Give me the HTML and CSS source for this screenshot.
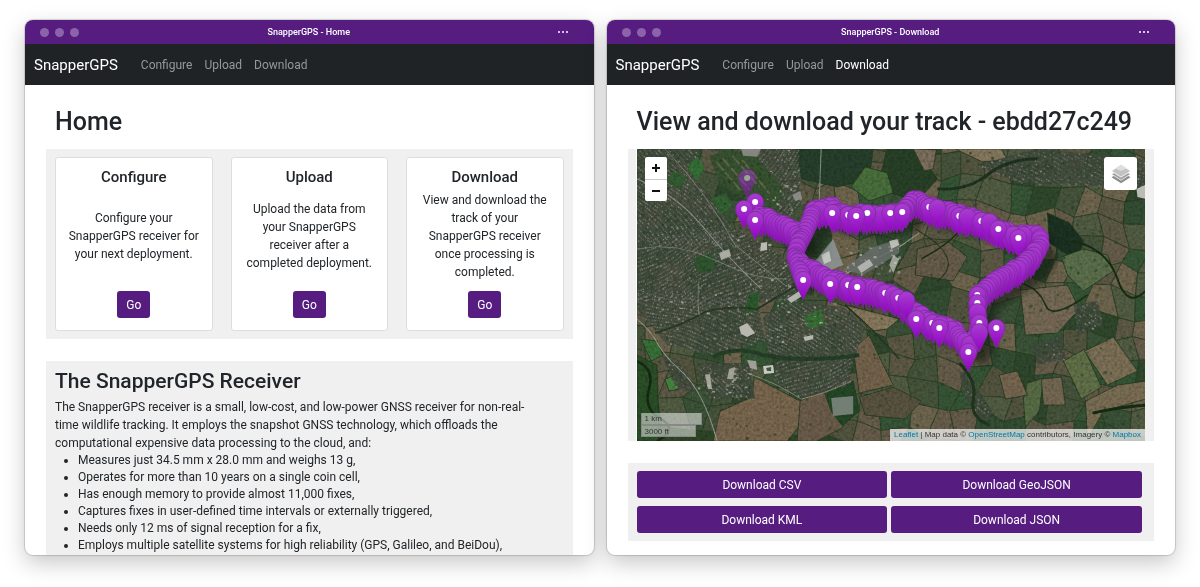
FILE: index.html
```
<!DOCTYPE html>
<html lang="en">
<head>
<meta charset="utf-8">
<meta name="viewport" content="width=device-width, initial-scale=1">
<title>SnapperGPS</title>
<link rel="stylesheet" href="styles.css">
</head>
<body>
<section class="window" aria-label="SnapperGPS - Home">
  <div class="titlebar">
    <div class="lights"><span></span><span></span><span></span></div>
    <div class="title">SnapperGPS - Home</div>
    <button class="more" type="button" aria-label="More"><i></i><i></i><i></i></button>
  </div>
  <nav class="navbar">
    <a class="brand" href="#">SnapperGPS</a>
    <a class="nav-link" href="#">Configure</a>
    <a class="nav-link" href="#">Upload</a>
    <a class="nav-link" href="#">Download</a>
  </nav>
  <main class="content">
    <h1>Home</h1>
    <div class="panel cards">
      <article class="card">
        <h2>Configure</h2>
        <p>Configure your SnapperGPS receiver for your next deployment.</p>
        <button class="btn" type="button">Go</button>
      </article>
      <article class="card">
        <h2>Upload</h2>
        <p>Upload the data from your SnapperGPS receiver after a completed deployment.</p>
        <button class="btn" type="button">Go</button>
      </article>
      <article class="card">
        <h2>Download</h2>
        <p>View and download the track of your SnapperGPS receiver once processing is completed.</p>
        <button class="btn" type="button">Go</button>
      </article>
    </div>
    <div class="panel about">
      <h2>The SnapperGPS Receiver</h2>
      <p>The SnapperGPS receiver is a small, low-cost, and low-power GNSS receiver for non-real-time wildlife tracking. It employs the snapshot GNSS technology, which offloads the computational expensive data processing to the cloud, and:</p>
      <ul>
        <li>Measures just 34.5 mm x 28.0 mm and weighs 13 g,</li>
        <li>Operates for more than 10 years on a single coin cell,</li>
        <li>Has enough memory to provide almost 11,000 fixes,</li>
        <li>Captures fixes in user-defined time intervals or externally triggered,</li>
        <li>Needs only 12 ms of signal reception for a fix,</li>
        <li>Employs multiple satellite systems for high reliability (GPS, Galileo, and BeiDou),</li>
      </ul>
    </div>
  </main>
</section>

<section class="window" aria-label="SnapperGPS - Download">
  <div class="titlebar">
    <div class="lights"><span></span><span></span><span></span></div>
    <div class="title">SnapperGPS - Download</div>
    <button class="more" type="button" aria-label="More"><i></i><i></i><i></i></button>
  </div>
  <nav class="navbar">
    <a class="brand" href="#">SnapperGPS</a>
    <a class="nav-link" href="#">Configure</a>
    <a class="nav-link" href="#">Upload</a>
    <a class="nav-link active" href="#" aria-current="page">Download</a>
  </nav>
  <main class="content">
    <h1>View and download your track - ebdd27c249</h1>
    <div class="panel map-panel">
      <div class="map">
        <svg id="map" class="map-canvas" viewBox="0 0 508 292" preserveAspectRatio="xMidYMid slice" role="img" aria-label="Satellite map with track">
          <defs>
            <linearGradient id="pin" x1="0" y1="0" x2="0" y2="1">
              <stop offset="0" stop-color="#a83fcf"/>
              <stop offset="1" stop-color="#9300c6"/>
            </linearGradient>
            <filter id="grain" x="0" y="0" width="1" height="1">
              <feTurbulence type="fractalNoise" baseFrequency="0.35" numOctaves="3" seed="4"/>
              <feColorMatrix values="0.9 0 0 0 0  0.9 0 0 0 0  0.9 0 0 0 0  0 0 0 0 1"/>
            </filter>
            <filter id="soft"><feGaussianBlur stdDeviation="3"/></filter>
          </defs>
          <rect width="508" height="292" fill="#25381f"/>
          <g id="land"></g>
          <g id="houses"></g>
          <g id="roads" fill="none"></g>
          <rect class="grain" width="508" height="292" filter="url(#grain)"/>
          <g id="buildings"></g>
          <g id="track"></g>
        </svg>
        <div class="zoom">
          <button type="button" aria-label="Zoom in"><svg viewBox="0 0 10 10"><path d="M5 1v8M1 5h8"/></svg></button>
          <button type="button" aria-label="Zoom out"><svg viewBox="0 0 10 10"><path d="M1 5h8"/></svg></button>
        </div>
        <button class="layers" type="button" aria-label="Layers">
          <svg viewBox="0 0 20 20">
            <path d="M0.5 13.3 10 19.3l9.500-6-2.500-1.500L10 16.200 3 11.800z" fill="#8d8d8d"/>
            <path d="M0.500 10.200 10 16.200l9.500-6-2.500-1.500L10 13.100 3 8.700z" fill="#a2a2a2" stroke="#fff" stroke-width=".6"/>
            <path d="M10 .8.500 7 10 13l9.500-6z" fill="#c2c2c2" stroke="#fff" stroke-width=".5"/>
            <path d="M10 .8 4.500 4.400 10 7l5.500-2.600z" fill="#dedede"/>
          </svg>
        </button>
        <div class="scale"><div class="km">1 km</div><div class="ft">3000 ft</div></div>
        <div class="attribution"><a href="#">Leaflet</a> | Map data © <a href="#">OpenStreetMap</a> contributors, Imagery © <a href="#">Mapbox</a></div>
      </div>
    </div>
    <div class="panel downloads">
      <button class="btn" type="button">Download CSV</button>
      <button class="btn" type="button">Download GeoJSON</button>
      <button class="btn" type="button">Download KML</button>
      <button class="btn" type="button">Download JSON</button>
    </div>
  </main>
</section>
<script src="map.js"></script>
</body>
</html>
```

FILE: styles.css
```
* { box-sizing: border-box; }

body {
  margin: 0;
  height: 100vh;
  padding: 20px 25px 32px;
  display: flex;
  gap: 13px;
  background: #fff;
  color: #212529;
  font-family: Roboto, "Liberation Sans", sans-serif;
  font-size: 12px;
  line-height: 18px;
}

h1, h2, p, ul { margin: 0; }
a { text-decoration: none; }
button { font: inherit; border: 0; padding: 0; cursor: pointer; }

.window {
  flex: 1 1 0;
  min-width: 0;
  display: flex;
  flex-direction: column;
  overflow: hidden;
  background: #fff;
  border-radius: 8px;
  box-shadow: 0 0 1px 1px rgba(0, 0, 0, .15), 0 8px 22px rgba(0, 0, 0, .22);
}

.titlebar {
  flex: none;
  height: 24px;
  display: grid;
  grid-template-columns: 1fr auto 1fr;
  align-items: center;
  padding: 0 26px 0 15px;
  background: #561c80;
  color: #fff;
}
.lights { display: flex; gap: 6px; }
.lights span { width: 9px; height: 9px; border-radius: 50%; background: #8c63a8; }
.title { padding-left: 10px; font-size: 9px; font-weight: 500; }
.more { justify-self: end; display: flex; gap: 2px; background: none; }
.more i { width: 2px; height: 2px; border-radius: 50%; background: #fff; }

.navbar {
  flex: none;
  height: 41px;
  display: flex;
  align-items: center;
  gap: 12px;
  padding: 0 9px;
  background: #1f2326;
}
.brand { margin-right: 11px; color: #fff; font-size: 15px; }
.nav-link { color: #96989a; }
.nav-link.active { color: #fff; }

.content { flex: 1; min-height: 0; overflow: hidden; padding: 21px 21px 0; }
h1 { padding: 0 9px; margin-bottom: 11px; font-size: 25px; line-height: 32px; font-weight: 500; white-space: nowrap; }

.panel { background: #f0f0f0; padding: 8px 9px; margin-bottom: 22px; }

.cards { display: grid; grid-template-columns: repeat(3, 1fr); gap: 18px; }
.card {
  min-height: 174px;
  display: flex;
  flex-direction: column;
  align-items: center;
  padding: 10px 10px 12px;
  background: #fff;
  border: 1px solid #dedede;
  border-radius: 3px;
  text-align: center;
}
.card h2 { font-size: 15px; line-height: 18px; font-weight: 500; }
.card p { flex: 1; display: flex; align-items: center; padding-bottom: 6px; }

.btn {
  height: 27px;
  padding: 0 9px;
  border-radius: 3px;
  background: #561c80;
  color: #fff;
}

.about h2 { font-size: 21px; line-height: 24px; font-weight: 500; margin-bottom: 5px; }
.about p { padding-right: 24px; }
.about ul { padding-left: 23px; line-height: 17px; }

.map-panel { padding: 0 9px 0 8px; }
.map { position: relative; border-left: 1px solid #fff; overflow: hidden; }
.map-canvas { display: block; width: 100%; height: 292px; }
.grain { mix-blend-mode: overlay; opacity: .4; }

.zoom {
  position: absolute;
  top: 8px;
  left: 8px;
  display: grid;
  border-radius: 2px;
  overflow: hidden;
}
.zoom button { width: 22px; height: 22px; display: grid; place-items: center; background: #fff; }
.zoom button + button { border-top: 1px solid #ccc; }
.zoom svg { width: 10px; height: 10px; fill: none; stroke: #111; stroke-width: 2; }

.layers {
  position: absolute;
  top: 8px;
  right: 8px;
  width: 33px;
  height: 33px;
  display: grid;
  place-items: center;
  background: #fff;
  border-radius: 3px;
}
.layers svg { width: 20px; height: 20px; }

.scale {
  position: absolute;
  left: 4px;
  bottom: 4px;
  color: #333;
  font: 8px/11px "Liberation Sans", Arial, sans-serif;
}
.scale div {
  height: 12px;
  padding-left: 3px;
  background: rgba(255, 255, 255, .5);
  border: 1px solid #888;
}
.scale .km { width: 61px; border-top: 0; }
.scale .ft { width: 55px; }

.attribution {
  position: absolute;
  right: 0;
  bottom: 0;
  padding: 0 4px;
  background: rgba(255, 255, 255, .7);
  color: #333;
  font: 8px/12px "Liberation Sans", Arial, sans-serif;
  white-space: nowrap;
}
.attribution a { color: #0078a8; }

.downloads { display: grid; grid-template-columns: 1fr 1fr; gap: 8px 4px; padding-right: 12px; }
```

FILE: map.js
```
const NS = 'http://www.w3.org/2000/svg';
const layer = id => document.getElementById(id);

function add(parent, tag, attrs) {
  const el = document.createElementNS(NS, tag);
  for (const k in attrs) el.setAttribute(k, attrs[k]);
  parent.appendChild(el);
  return el;
}

let seed = 7;
function rnd() {
  seed = (seed * 16807) % 2147483647;
  return seed / 2147483647;
}
const pick = list => list[Math.floor(rnd() * list.length)];

function inside(x, y, poly) {
  let hit = false;
  for (let i = 0, j = poly.length - 1; i < poly.length; j = i++) {
    const [xi, yi] = poly[i], [xj, yj] = poly[j];
    if ((yi > y) !== (yj > y) && x < (xj - xi) * (y - yi) / (yj - yi) + xi) hit = !hit;
  }
  return hit;
}

/* Patchwork of fields */
const fieldColours = ['#4b4838', '#434533', '#30432d', '#2a3f29', '#534b3c', '#394430', '#5a523f', '#263a24', '#424b36', '#2c452c'];
const land = layer('land');
const cols = 24, rows = 15, nodes = [];
for (let r = 0; r <= rows; r++) {
  nodes.push([]);
  for (let c = 0; c <= cols; c++) {
    nodes[r].push([
      (c - 1) * 24 + (r - 7) * -3 + (rnd() - .5) * 15,
      (r - 2) * 23 + (c - 12) * 3 + (rnd() - .5) * 14
    ]);
  }
}
for (let r = 0; r < rows; r++) {
  for (let c = 0; c < cols; c++) {
    const q = [nodes[r][c], nodes[r][c + 1], nodes[r + 1][c + 1], nodes[r + 1][c]];
    add(land, 'polygon', { points: q.join(' '), fill: pick(fieldColours), stroke: '#24351f', 'stroke-width': .8 });
  }
}

/* Named pieces of woodland and farmland */
const plots = [
  ['#1f3323', [[156, 0], [236, 0], [232, 30], [200, 38], [165, 30]]],
  ['#20341f', [[250, 0], [280, 0], [300, 30], [280, 52], [240, 40]]],
  ['#3b5a30', [[228, 18], [250, 24], [256, 44], [232, 52], [214, 38]]],
  ['#65594a', [[276, 0], [299, 1], [296, 20], [287, 22]]],
  ['#6c614c', [[318, 0], [364, 0], [370, 11], [345, 13]]],
  ['#16281b', [[410, 64], [432, 74], [446, 92], [440, 112], [412, 94]]],
  ['#4a5a3d', [[424, 108], [446, 100], [470, 106], [476, 122], [446, 142], [430, 126]]],
  ['#5f5544', [[383, 141], [430, 136], [442, 160], [420, 184], [388, 186]]],
  ['#4f5b3a', [[426, 212], [447, 200], [464, 238], [444, 250]]],
  ['#645a45', [[447, 202], [476, 188], [500, 222], [470, 236]]],
  ['#625843', [[448, 252], [480, 236], [508, 232], [508, 250], [466, 262], [450, 290]]],
  ['#475738', [[390, 234], [406, 229], [402, 262], [388, 278], [386, 250]]],
  ['#5e5442', [[404, 230], [424, 228], [428, 256], [406, 256]]],
  ['#605240', [[362, 226], [380, 222], [390, 246], [368, 250]]],
  ['#1d3a1f', [[190, 240], [216, 232], [222, 262], [206, 276], [192, 262]]],
  ['#62533f', [[83, 262], [115, 248], [117, 228], [163, 252], [168, 270], [150, 292], [76, 292]]],
  ['#574b3c', [[163, 252], [186, 240], [194, 262], [206, 278], [180, 292], [160, 292]]],
  ['#5e503d', [[216, 200], [232, 186], [243, 210], [256, 236], [222, 244]]],
  ['#6e624b', [[208, 156], [240, 164], [262, 170], [250, 180], [234, 182]]],
  ['#484334', [[222, 248], [256, 238], [284, 252], [268, 270], [228, 266]]],
  ['#544b3c', [[280, 100], [310, 92], [330, 108], [316, 132], [278, 126]]],
  ['#2d5a2c', [[4, 190], [20, 192], [26, 206], [14, 212]]],
  ['#3a6a34', [[28, 230], [38, 226], [42, 240], [32, 242]]],
  ['#22401f', [[0, 206], [20, 216], [22, 292], [0, 292]]]
];
plots.forEach(([fill, p]) => add(land, 'polygon', { points: p.join(' '), fill, stroke: '#1c2f19', 'stroke-width': .8 }));

/* Built-up areas: rows of small roofs following each district's street angle */
const districts = [
  [.75, .85, [[0, 0], [62, 0], [58, 30], [88, 66], [104, 96], [0, 96]]],
  [-.5, .85, [[0, 90], [100, 80], [150, 110], [160, 150], [60, 160], [0, 150]]],
  [.3, .8, [[0, 140], [120, 150], [128, 190], [80, 206], [30, 196], [0, 160]]],
  [-.9, .85, [[70, 0], [160, 0], [164, 56], [140, 76], [128, 40], [118, 14]]],
  [.6, .85, [[126, 168], [150, 152], [206, 158], [228, 178], [218, 208], [132, 208]]],
  [-.4, .85, [[138, 212], [214, 208], [212, 236], [164, 250], [136, 230]]],
  [.9, .6, [[60, 214], [112, 214], [118, 250], [70, 248]]],
  [.2, .5, [[24, 206], [44, 216], [60, 244], [40, 240]]],
  [.4, .6, [[340, 16], [400, 0], [508, 10], [508, 40], [440, 36], [380, 34]]],
  [.7, .5, [[436, 156], [460, 152], [466, 176], [440, 186]]],
  [.5, .4, [[396, 196], [424, 186], [428, 210], [400, 216]]],
  [.8, .4, [[322, 222], [334, 226], [344, 246], [356, 262], [348, 274], [326, 246]]]
];
const roofs = ['#5f605b', '#6d6a64', '#52544f', '#7d7b75', '#474d44', '#5a5249'];
const roofPaths = roofs.map(() => '');
districts.forEach(([angle, density, poly]) => {
  add(layer('houses'), 'polygon', { points: poly.join(' '), fill: '#343d30', opacity: .85 });
  const ca = Math.cos(angle), sa = Math.sin(angle);
  for (let v = -520; v < 520; v += 3.6) {
    for (let u = -100; u < 620; u += 2.2) {
      const bend = Math.sin(u / 17 + v / 31) * 3;
      const x = u * ca - (v + bend) * sa, y = u * sa + (v + bend) * ca;
      if (rnd() > density || !inside(x, y, poly)) continue;
      const i = Math.floor(rnd() * roofs.length);
      const w = 1 + rnd() * 1.1, h = .9 + rnd() * 1.1;
      roofPaths[i] += `M${x.toFixed(1)} ${y.toFixed(1)}l${(w * ca).toFixed(1)} ${(w * sa).toFixed(1)}l${(-h * sa).toFixed(1)} ${(h * ca).toFixed(1)}l${(-w * ca).toFixed(1)} ${(-w * sa).toFixed(1)}z`;
    }
  }
});
roofPaths.forEach((d, i) => add(layer('houses'), 'path', { d, fill: roofs[i], opacity: .75 }));

/* Golf course and parks between the districts */
[
  ['#2c4227', [[72, 8], [90, 0], [118, 6], [146, 40], [140, 64], [110, 52], [84, 36]]],
  ['#2b5a2c', [[50, 18], [60, 8], [68, 18], [60, 32]]],
  ['#2a4f2a', [[74, 50], [88, 44], [96, 56], [84, 66]]],
  ['#234a25', [[112, 146], [122, 142], [120, 162], [108, 164]]],
  ['#2f5a2c', [[166, 168], [184, 160], [188, 176], [172, 180]]],
  ['#294b28', [[36, 22], [50, 28], [44, 40], [30, 34]]],
  ['#274526', [[56, 110], [74, 104], [80, 120], [62, 124]]]
].forEach(([fill, p]) => add(layer('houses'), 'polygon', { points: p.join(' '), fill }));
['M80 14L104 42', 'M86 10L112 40', 'M96 8L122 38', 'M106 12L132 44'].forEach(d =>
  add(layer('houses'), 'path', { d, fill: 'none', stroke: '#50543a', 'stroke-width': 2, 'stroke-linecap': 'round', 'stroke-dasharray': '9 4' }));

/* Tree clumps */
for (let i = 0; i < 600; i++) {
  add(layer('houses'), 'circle', { cx: (rnd() * 508).toFixed(1), cy: (rnd() * 292).toFixed(1), r: (.5 + rnd() * 1.2).toFixed(1), fill: '#20351d', opacity: .6 });
}

/* Roads, tracks and the river */
[
  ['M0 30Q40 46 66 78T124 140', '#777a74', 1],
  ['M28 0Q70 44 98 96L150 138', '#70746d', .8],
  ['M0 100Q40 92 80 112T150 130', '#70746d', .7],
  ['M0 170Q12 180 18 190Q26 206 42 220Q66 240 80 292', '#7b7f77', 1],
  ['M18 184Q44 176 62 166T120 160L170 130', '#23301f', 2],
  ['M62 132Q60 150 62 166', '#6c7069', .8],
  ['M184 0L182 52', '#737b73', 1],
  ['M206 126L262 98L282 84', '#777c70', 1.2],
  ['M76 208Q100 196 126 206Q168 214 222 206', '#1f3320', 4],
  ['M110 224Q140 234 164 250Q190 244 214 232', '#7d7c6d', .8],
  ['M208 156Q240 184 262 210', '#1b2d19', 1.5],
  ['M0 212Q18 220 12 240T24 270T20 292', '#12220f', 2.5],
  ['M384 134Q402 140 408 156T450 146', '#172914', 1.6],
  ['M436 92Q470 100 480 130T508 142', '#14240f', 2],
  ['M284 110Q310 96 320 84', '#172914', 1.6],
  ['M455 264Q480 258 508 256', '#12240f', 3],
  ['M278 80Q330 110 300 132', '#1a2a17', 1],
  ['M300 40Q330 42 350 26T400 10', '#18291a', 3],
  ['M322 214Q340 232 336 250T352 276', '#1a2b18', 3]
].forEach(([d, stroke, w]) => add(layer('roads'), 'path', { d, stroke, 'stroke-width': w }));

/* Large pale buildings */
[
  ['#8d9493', [[178, 112], [196, 90], [206, 116], [186, 124]]],
  ['#c9cac4', [[184, 106], [192, 102], [194, 112], [187, 115]]],
  ['#666c68', [[206, 120], [236, 98], [262, 90], [262, 104], [226, 126]]],
  ['#b7bab4', [[220, 118], [232, 110], [236, 116], [224, 124]]],
  ['#c5c7bf', [[252, 92], [260, 90], [262, 96], [254, 100]]],
  ['#c8c8c0', [[124, 94], [130, 93], [130, 101], [123, 102]]],
  ['#b5b5ad', [[82, 104], [92, 100], [94, 107], [84, 111]]],
  ['#c4c3bb', [[102, 178], [110, 174], [118, 184], [110, 188], [104, 185]]],
  ['#aaa9a2', [[110, 211], [119, 212], [120, 221], [113, 219]]],
  ['#d6d6d0', [[126, 217], [136, 216], [137, 224], [127, 225]]],
  ['#2f4a33', [[129, 219], [134, 218], [134, 222], [130, 222]]],
  ['#7c857e', [[194, 249], [216, 247], [216, 265], [196, 267]]],
  ['#b0aea2', [[68, 226], [73, 225], [75, 240], [71, 240]]],
  ['#a9a89d', [[92, 220], [98, 218], [96, 230], [90, 230]]],
  ['#bfc1ba', [[150, 150], [162, 142], [165, 147], [154, 154]]],
  ['#c3c3bb', [[166, 188], [176, 186], [176, 190], [168, 192]]],
  ['#8f918b', [[155, 46], [163, 42], [165, 50], [158, 52]]],
  ['#8d8c86', [[104, 0], [124, 0], [120, 8], [106, 7]]],
  ['#c9cac4', [[499, 40], [508, 36], [508, 50], [500, 48]]],
  ['#a9aaa2', [[256, 106], [262, 110], [256, 124], [252, 116]]]
].forEach(([fill, p]) => add(layer('buildings'), 'polygon', { points: p.join(' '), fill, opacity: .9 }));
for (let i = 0; i < 170; i++) {
  const zone = pick([[60, 218, 56, 32], [20, 130, 120, 60], [100, 90, 60, 60], [130, 0, 30, 60], [206, 95, 55, 30], [140, 145, 60, 50]]);
  add(layer('buildings'), 'rect', {
    x: (zone[0] + rnd() * zone[2]).toFixed(1), y: (zone[1] + rnd() * zone[3]).toFixed(1),
    width: (1 + rnd() * 2.2).toFixed(1), height: (1 + rnd() * 1.6).toFixed(1), fill: '#c4c4bb', opacity: (.2 + rnd() * .5).toFixed(2)
  });
}

/* Track: each route lists the centres of the pin heads */
const routes = [
  [[119, 67], [128, 68], [143, 74], [158, 82], [163, 89]],
  [[163, 91], [168, 82], [174, 70], [176, 61], [195, 58], [197, 64], [233, 65], [253, 65], [266, 62], [271, 55], [276, 49], [287, 54], [298, 59], [322, 65], [344, 71], [361, 79], [372, 84], [386, 86], [397, 84], [403, 86]],
  [[403, 88], [403, 95], [396, 106], [383, 117], [366, 127], [350, 137], [342, 144], [341, 155], [340, 165], [342, 176], [338, 187], [331, 200]],
  [[163, 90], [160, 98], [158, 106], [166, 116], [178, 122], [193, 129], [218, 137], [243, 141], [258, 147], [266, 153], [279, 163], [293, 172], [308, 176], [318, 182], [330, 196]],
  [[158, 108], [161, 116], [166, 131]]
];
const track = layer('track');
routes.forEach(r => add(track, 'polyline', {
  points: r.map(([x, y]) => [x + 10, y + 13]).join(' '),
  fill: 'none', stroke: '#0a120a', 'stroke-width': 17, 'stroke-linejoin': 'round', opacity: .5, filter: 'url(#soft)'
}));

function drawPin(x, y, dot, opacity = 1) {
  const g = add(track, 'g', { transform: `translate(${x.toFixed(1)} ${y.toFixed(1)})`, opacity });
  add(g, 'path', { d: 'M0 20C-2 13-8.500 6-8.500 0A8.500 8.500 0 0 1 8.500 0C8.500 6 2 13 0 20Z', fill: 'url(#pin)', stroke: '#7d2a9c', 'stroke-width': .8 });
  if (dot) add(g, 'circle', { r: 3, fill: '#fff' });
}

const pins = [];
routes.forEach(r => {
  for (let i = 1; i < r.length; i++) {
    const [ax, ay] = r[i - 1], [bx, by] = r[i];
    const n = Math.max(1, Math.round(Math.hypot(bx - ax, by - ay) / 3.4));
    for (let k = 0; k < n; k++) {
      pins.push([ax + (bx - ax) * k / n + (rnd() - .5), ay + (by - ay) * k / n + (rnd() - .5) * 3]);
    }
  }
});
drawPin(110, 29, true, .5);
drawPin(118, 53, true);
pins.sort((a, b) => a[1] - b[1]).forEach(([x, y]) => drawPin(x, y, false));

/* Pins whose dot is partly covered by a neighbour */
[[211, 66, 8, 1], [292, 58, 8, 1], [322, 67, 8, 1], [344, 72, 8, 1], [211, 136, 9, 1], [248, 144, 8, 2], [261, 149, 8, 2], [295, 174, 8, 2], [340, 146, 0, 9], [340, 154, 0, 9], [342, 174, 0, 9]]
  .forEach(([x, y, dx, dy]) => { drawPin(x, y, true); drawPin(x + dx, y + dy, false); });

/* Fully visible pins */
[[107, 60], [118, 71], [195, 64], [230, 64], [219, 67], [253, 64], [265, 63], [361, 80], [381, 89], [166, 131], [193, 135], [220, 138], [279, 170], [302, 179], [359, 179], [331, 203]]
  .forEach(([x, y]) => drawPin(x, y, true));
```
